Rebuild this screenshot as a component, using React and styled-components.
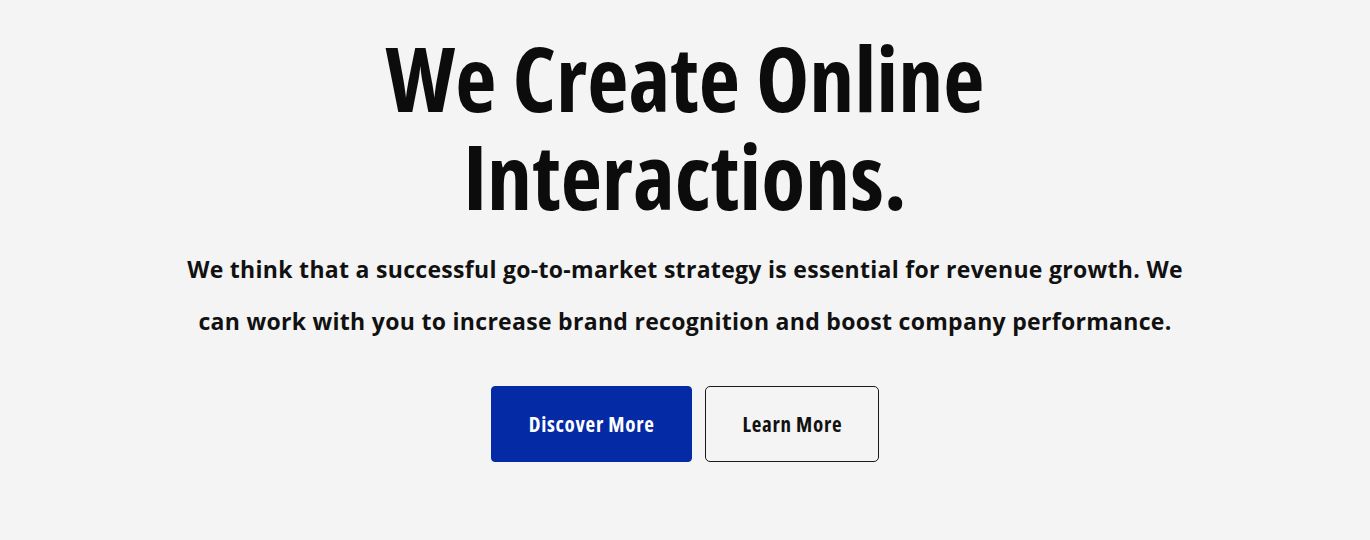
import styled, { createGlobalStyle } from "styled-components";

const GlobalStyle = createGlobalStyle`
  html, body {
    margin: 0;
    padding: 0;
    background: #f4f4f4;
  }
`;

export default function App() {
  return (
    <>
      <GlobalStyle />
      <Hero>
        <Title>
          We Create Online
          <br />
          Interactions.
        </Title>
        <Lead>
          We think that a successful go-to-market strategy is essential for
          revenue growth. We can work with you to increase brand recognition
          and boost company performance.
        </Lead>
        <Actions>
          <Button $primary>Discover More</Button>
          <Button>Learn More</Button>
        </Actions>
      </Hero>
    </>
  );
}

const Hero = styled.section`
  display: flex;
  flex-direction: column;
  align-items: center;
  padding: 28px 20px 0;
  height: 540px;
  box-sizing: border-box;
  background: #f4f4f4;
  color: #0c0c0c;
  text-align: center;
  font-family: "Open Sans", sans-serif;
`;

const Title = styled.h1`
  margin: 0;
  font-weight: 700;
  font-stretch: 75%;
  font-size: 90px;
  line-height: 98px;
`;

const Lead = styled.p`
  margin: 19px 0 0;
  max-width: 1010px;
  font-weight: 700;
  font-size: 23px;
  letter-spacing: 0.3px;
  line-height: 52px;
  color: #111;
`;

const Actions = styled.div`
  display: flex;
  gap: 13px;
  margin-top: 39px;
`;

const Button = styled.button`
  box-sizing: border-box;
  height: 76px;
  padding: 0 ${(p) => (p.$primary ? "37px" : "36px")};
  border-radius: ${(p) => (p.$primary ? "4px" : "5px")};
  border: 1px solid ${(p) => (p.$primary ? "#052aa6" : "#1a1a1a")};
  background: ${(p) => (p.$primary ? "#052aa6" : "transparent")};
  color: ${(p) => (p.$primary ? "#fff" : "#111")};
  font-family: "Open Sans", sans-serif;
  font-weight: 700;
  font-stretch: 75%;
  letter-spacing: 0.7px;
  font-size: 21px;
  cursor: pointer;
`;
